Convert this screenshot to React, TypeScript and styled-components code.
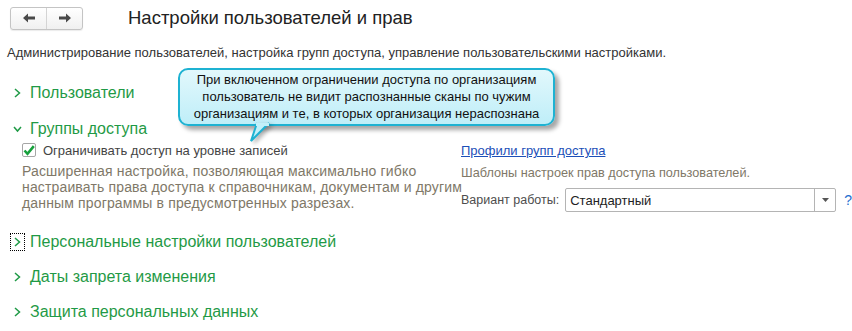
import React from "react";
import styled, { createGlobalStyle } from "styled-components";

const GlobalStyle = createGlobalStyle`
  html, body {
    margin: 0;
    padding: 0;
    background: #ffffff;
  }
  body {
    font-family: "Liberation Sans", Arial, sans-serif;
    color: #333333;
  }
`;

const Chevron: React.FC<{ open?: boolean }> = ({ open }) => (
  <svg width="9" height="10" viewBox="0 0 9 10">
    {open ? (
      <polyline points="1,3 4.5,7 8,3" fill="none" stroke="#1f9a46" strokeWidth="1.5" />
    ) : (
      <polyline points="2,1 6.5,5 2,9" fill="none" stroke="#1f9a46" strokeWidth="1.5" />
    )}
  </svg>
);

const Arrow: React.FC<{ dir: "left" | "right" }> = ({ dir }) => (
  <svg width="12" height="10" viewBox="0 0 12 10">
    {dir === "left" ? (
      <path d="M0 5 L5 0.5 L5 3.6 L12 3.6 L12 6.4 L5 6.4 L5 9.5 Z" fill="#4a4a4a" />
    ) : (
      <path d="M12 5 L7 0.5 L7 3.6 L0 3.6 L0 6.4 L7 6.4 L7 9.5 Z" fill="#4a4a4a" />
    )}
  </svg>
);

export default function App() {
  return (
    <>
      <GlobalStyle />
      <Page>
        <Header>
          <NavGroup>
            <NavButton>
              <Arrow dir="left" />
            </NavButton>
            <NavButton>
              <Arrow dir="right" />
            </NavButton>
          </NavGroup>
          <Title>Настройки пользователей и прав</Title>
        </Header>
        <Description>
          Администрирование пользователей, настройка групп доступа, управление пользовательскими настройками.
        </Description>

        <SectionRow $height={36}>
          <ChevronBox>
            <Chevron />
          </ChevronBox>
          <SectionTitle>Пользователи</SectionTitle>
        </SectionRow>

        <SectionRow $height={36}>
          <ChevronBox>
            <Chevron open />
          </ChevronBox>
          <SectionTitle>Группы доступа</SectionTitle>
        </SectionRow>

        <GroupBody>
          <LeftColumn>
            <CheckRow>
              <CheckBox>
                <svg width="12" height="11" viewBox="0 0 12 11">
                  <polyline
                    points="1.5,5.5 4.5,8.8 10.8,1.2"
                    fill="none"
                    stroke="#16a03c"
                    strokeWidth="2.6"
                  />
                </svg>
              </CheckBox>
              <Label>Ограничивать доступ на уровне записей</Label>
            </CheckRow>
            <Hint>
              Расширенная настройка, позволяющая максимально гибко
              <br />
              настраивать права доступа к справочникам, документам и другим
              <br />
              данным программы в предусмотренных разрезах.
            </Hint>
          </LeftColumn>
          <RightColumn>
            <Link>Профили групп доступа</Link>
            <RightHint>Шаблоны настроек прав доступа пользователей.</RightHint>
            <SelectRow>
              <FieldLabel>Вариант работы:</FieldLabel>
              <Select>
                <SelectValue>Стандартный</SelectValue>
                <SelectButton>
                  <svg width="7" height="4" viewBox="0 0 7 4">
                    <path d="M0 0 L7 0 L3.5 4 Z" fill="#555" />
                  </svg>
                </SelectButton>
              </Select>
              <Help>?</Help>
            </SelectRow>
          </RightColumn>
        </GroupBody>

        <SectionRow $height={34}>
          <ChevronBox $focused>
            <Chevron />
          </ChevronBox>
          <SectionTitle>Персональные настройки пользователей</SectionTitle>
        </SectionRow>
        <SectionRow $height={35}>
          <ChevronBox>
            <Chevron />
          </ChevronBox>
          <SectionTitle>Даты запрета изменения</SectionTitle>
        </SectionRow>
        <SectionRow $height={35}>
          <ChevronBox>
            <Chevron />
          </ChevronBox>
          <SectionTitle>Защита персональных данных</SectionTitle>
        </SectionRow>

        <Bubble>
          При включенном ограничении доступа по организациям
          <br />
          пользователь не видит распознанные сканы по чужим
          <br />
          организациям и те, в которых организация нераспознана
          <BubbleTail viewBox="0 0 20 19" width="20" height="19">
            <path d="M6 0 L0 18 L18 0" fill="#c2f0f9" stroke="#1eb2d2" strokeWidth="2" />
            <rect x="5" y="0" width="13" height="3" fill="#c2f0f9" />
          </BubbleTail>
        </Bubble>
      </Page>
    </>
  );
}

const Page = styled.div`
  position: relative;
  width: 852px;
  height: 331px;
  overflow: hidden;
  padding: 6px 0 0 0;
  box-sizing: border-box;
`;

const Header = styled.div`
  display: flex;
  align-items: center;
  height: 24px;
  padding-left: 10px;
`;

const NavGroup = styled.div`
  display: flex;
  width: 73px;
  height: 23px;
  border: 1px solid #c4c4c4;
  border-radius: 3px;
  box-sizing: border-box;
  background: linear-gradient(#ffffff, #f0f0f0);
  box-shadow: 0 1px 1px rgba(0, 0, 0, 0.08);
`;

const NavButton = styled.div`
  flex: 1;
  display: flex;
  align-items: center;
  justify-content: center;
  & + & {
    border-left: 1px solid #d4d4d4;
  }
`;

const Title = styled.h1`
  margin: 0 0 0 45px;
  font-size: 18.5px;
  font-weight: normal;
  color: #222222;
`;

const Description = styled.div`
  margin-top: 15px;
  padding-left: 7px;
  font-size: 13px;
  line-height: 15px;
  color: #333333;
  height: 30px;
`;

const SectionRow = styled.div<{ $height: number }>`
  display: flex;
  align-items: center;
  height: ${(p) => p.$height}px;
  padding-left: 10px;
`;

const ChevronBox = styled.div<{ $focused?: boolean }>`
  width: 15px;
  height: 18px;
  display: flex;
  align-items: center;
  justify-content: center;
  box-sizing: border-box;
  border: 1px dotted ${(p) => (p.$focused ? "#000000" : "transparent")};
  margin-right: 5px;
`;

const SectionTitle = styled.div`
  font-size: 16px;
  color: #1f9a46;
`;

const GroupBody = styled.div`
  display: grid;
  grid-template-columns: 439px 1fr;
  height: 78px;
  padding-left: 22px;
`;

const LeftColumn = styled.div`
  display: flex;
  flex-direction: column;
`;

const CheckRow = styled.div`
  display: flex;
  align-items: center;
  height: 16px;
  margin-top: -5px;
`;

const CheckBox = styled.div`
  width: 14px;
  height: 14px;
  border: 1px solid #a6a6a6;
  border-radius: 2px;
  box-sizing: border-box;
  display: flex;
  align-items: center;
  justify-content: center;
  margin-right: 7px;
  background: #ffffff;
`;

const Label = styled.span`
  font-size: 13px;
  color: #444444;
  white-space: nowrap;
`;

const FieldLabel = styled(Label)`
  font-size: 12.5px;
  color: #4d4d4d;
`;

const Hint = styled.div`
  margin-top: 5px;
  font-size: 14px;
  letter-spacing: 0.15px;
  line-height: 16px;
  color: #807868;
  white-space: nowrap;
`;

const RightColumn = styled.div`
  display: flex;
  flex-direction: column;
  align-items: flex-start;
`;

const Link = styled.a`
  font-size: 13px;
  color: #1c4fb8;
  text-decoration: underline;
  line-height: 16px;
  margin-top: -4px;
`;

const RightHint = styled.div`
  margin-top: 7px;
  font-size: 12.7px;
  line-height: 15px;
  color: #807868;
`;

const SelectRow = styled.div`
  display: flex;
  align-items: center;
  margin-top: 7px;
  gap: 6px;
`;

const Select = styled.div`
  display: flex;
  width: 271px;
  height: 24px;
  border: 1px solid #b4b4b4;
  border-radius: 2px;
  box-sizing: border-box;
  background: #ffffff;
`;

const SelectValue = styled.div`
  flex: 1;
  display: flex;
  align-items: center;
  padding-left: 4px;
  font-size: 13px;
  color: #222222;
`;

const SelectButton = styled.div`
  width: 20px;
  display: flex;
  align-items: center;
  justify-content: center;
  border-left: 1px solid #b4b4b4;
`;

const Help = styled.span`
  margin-left: 2px;
  font-size: 14px;
  color: #1f6fd0;
`;

const Bubble = styled.div`
  position: absolute;
  left: 178px;
  top: 68px;
  width: 377px;
  height: 58px;
  box-sizing: border-box;
  border: 2px solid #1eb2d2;
  border-radius: 10px;
  background: linear-gradient(#e2f8fc, #bfeef8);
  box-shadow: 4px 4px 4px rgba(0, 0, 0, 0.35);
  font-size: 13px;
  line-height: 17px;
  color: #111111;
  text-align: center;
  padding-top: 1px;
  white-space: nowrap;
`;

const BubbleTail = styled.svg`
  position: absolute;
  left: 71px;
  top: 53px;
  overflow: visible;
  filter: drop-shadow(3px 2px 2px rgba(0, 0, 0, 0.3));
`;
